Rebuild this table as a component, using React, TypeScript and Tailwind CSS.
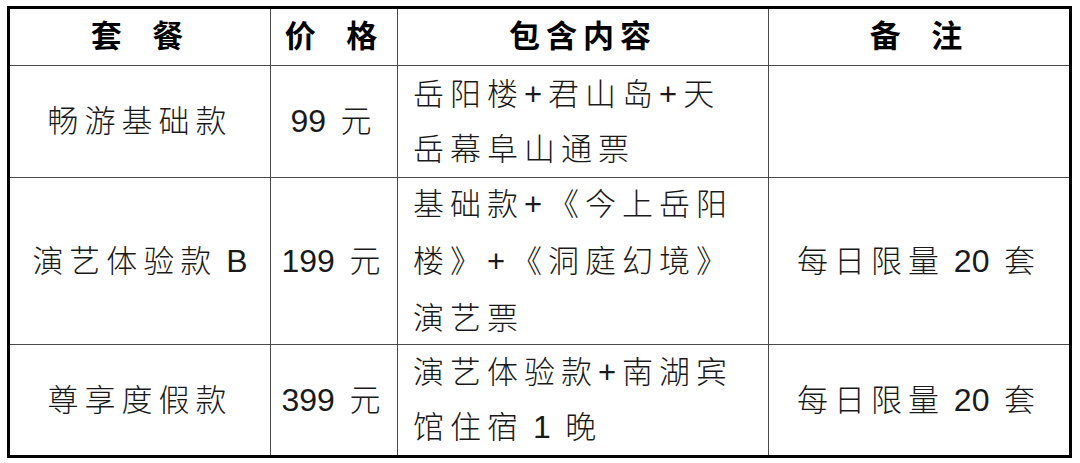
import React from "react";

const font = { fontFamily: '"Liberation Sans", "Noto Sans CJK SC", sans-serif' };

function N({ children }: { children: React.ReactNode }) {
  return <span className="tracking-normal text-[32px]">{children}</span>;
}

export default function App() {
  const cell = "bg-white flex items-center";
  const txt = "text-[31px] font-light text-[#1a1a1a] tracking-[6px] leading-[55px]";
  const head = "text-[31px] font-bold text-black tracking-[6px] [word-spacing:10px]";
  return (
    <div className="w-[1080px] h-[463px] bg-white pt-[6px] pl-[7px]" style={font}>
      <div className="w-[1065px] border-[3px] border-black">
        <div className="grid grid-cols-[260px_126px_370px_300px] grid-rows-[56px_111px_166px_110px] gap-px bg-[#4a4a4a]">
          <div className={`${cell} justify-center`}><span className={head}>套 餐</span></div>
          <div className={`${cell} justify-center`}><span className={head}>价 格</span></div>
          <div className={`${cell} justify-center`}><span className={head}>包含内容</span></div>
          <div className={`${cell} justify-center`}><span className={head}>备 注</span></div>

          <div className={`${cell} justify-center`}><span className={txt}>畅游基础款</span></div>
          <div className={`${cell} justify-center`}><span className={txt}><N>99</N> 元</span></div>
          <div className={`${cell} pl-[15px]`}>
            <div className={txt}>
              <div>岳阳楼+君山岛+天</div>
              <div>岳幕阜山通票</div>
            </div>
          </div>
          <div className={cell}></div>

          <div className={`${cell} justify-center`}><span className={txt}>演艺体验款<N> B</N></span></div>
          <div className={`${cell} justify-center`}><span className={txt}><N>199</N> 元</span></div>
          <div className={`${cell} pl-[15px]`}>
            <div className={`${txt} leading-[57px]`}>
              <div>基础款+《今上岳阳</div>
              <div>楼》+《洞庭幻境》</div>
              <div>演艺票</div>
            </div>
          </div>
          <div className={`${cell} justify-center`}><span className={txt}>每日限量<N> 20</N> 套</span></div>

          <div className={`${cell} justify-center`}><span className={txt}>尊享度假款</span></div>
          <div className={`${cell} justify-center`}><span className={txt}><N>399</N> 元</span></div>
          <div className={`${cell} pl-[15px]`}>
            <div className={txt}>
              <div>演艺体验款+南湖宾</div>
              <div>馆住宿<N> 1</N> 晚</div>
            </div>
          </div>
          <div className={`${cell} justify-center`}><span className={txt}>每日限量<N> 20</N> 套</span></div>
        </div>
      </div>
    </div>
  );
}
